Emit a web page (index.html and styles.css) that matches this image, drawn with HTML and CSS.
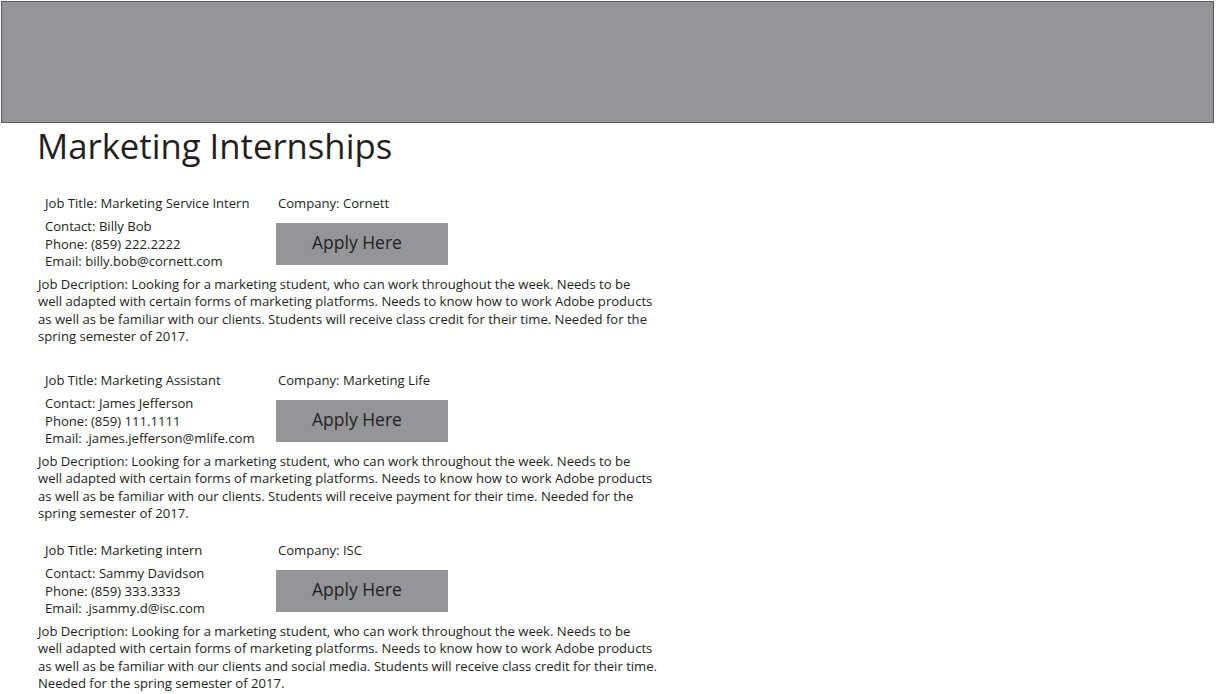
FILE: index.html
```html
<!DOCTYPE html>
<html lang="en">
<head>
<meta charset="utf-8">
<title>Marketing Internships</title>
<link rel="stylesheet" href="styles.css">
</head>
<body>
<header class="banner"></header>
<main class="content">
  <h1 class="page-title">Marketing Internships</h1>

  <section class="job">
    <div class="job-grid">
      <div class="job-title">Job Title: Marketing Service Intern</div>
      <div class="job-company">Company: Cornett</div>
      <div class="job-contact">
        <div>Contact: Billy Bob</div>
        <div>Phone: (859) 222.2222</div>
        <div>Email: billy.bob@cornett.com</div>
      </div>
      <a class="apply-btn" href="#">Apply Here</a>
    </div>
    <p class="job-desc">Job Decription: Looking for a marketing student, who can work throughout the week. Needs to be<br>well adapted with certain forms of marketing platforms. Needs to know how to work Adobe products<br>as well as be familiar with our clients. Students will receive class credit for their time. Needed for the<br>spring semester of 2017.</p>
  </section>

  <section class="job job--second">
    <div class="job-grid">
      <div class="job-title">Job Title: Marketing Assistant</div>
      <div class="job-company">Company: Marketing Life</div>
      <div class="job-contact">
        <div>Contact: James Jefferson</div>
        <div>Phone: (859) 111.1111</div>
        <div>Email: .james.jefferson@mlife.com</div>
      </div>
      <a class="apply-btn" href="#">Apply Here</a>
    </div>
    <p class="job-desc">Job Decription: Looking for a marketing student, who can work throughout the week. Needs to be<br>well adapted with certain forms of marketing platforms. Needs to know how to work Adobe products<br>as well as be familiar with our clients. Students will receive payment for their time. Needed for the<br>spring semester of 2017.</p>
  </section>

  <section class="job job--third">
    <div class="job-grid">
      <div class="job-title">Job Title: Marketing intern</div>
      <div class="job-company">Company: ISC</div>
      <div class="job-contact">
        <div>Contact: Sammy Davidson</div>
        <div>Phone: (859) 333.3333</div>
        <div>Email: .jsammy.d@isc.com</div>
      </div>
      <a class="apply-btn" href="#">Apply Here</a>
    </div>
    <p class="job-desc">Job Decription: Looking for a marketing student, who can work throughout the week. Needs to be<br>well adapted with certain forms of marketing platforms. Needs to know how to work Adobe products<br>as well as be familiar with our clients and social media. Students will receive class credit for their time.<br>Needed for the spring semester of 2017.</p>
  </section>
</main>
</body>
</html>
```
FILE: styles.css
```css
* { box-sizing: border-box; }

html, body {
  margin: 0;
  padding: 0;
  background: #ffffff;
}

body {
  font-family: "Open Sans", "Noto Sans", sans-serif;
  color: #231f20;
  font-size: 13.1px;
  line-height: 17.5px;
  overflow: hidden;
}

.banner {
  display: block;
  height: 122px;
  margin: 1px 2px 0 1px;
  background: #939598;
  border: 1px solid #5b5c5e;
}

.content {
  padding-left: 38px;
}

.page-title {
  margin: 3px 0 0 -1px;
  font-size: 34.7px;
  line-height: 40px;
  font-weight: 400;
  color: #231f20;
}

.job {
  margin-top: 28.5px;
}

.job--second {
  margin-top: 26.3px;
}

.job--third {
  margin-top: 19px;
}

.job-grid {
  display: grid;
  grid-template-columns: 238px 172px;
  row-gap: 6px;
  align-items: start;
}

.job-title {
  padding-left: 7px;
}

.job-company {
  padding-left: 2px;
}

.job-contact {
  padding-left: 7px;
}

.apply-btn {
  display: block;
  height: 42px;
  margin-top: 5px;
  padding-left: 36px;
  background: #939598;
  color: #231f20;
  font-size: 17.5px;
  line-height: 39px;
  text-decoration: none;
  white-space: nowrap;
}

.job-desc {
  margin: 5px 0 0 0;
  white-space: nowrap;
}
```
